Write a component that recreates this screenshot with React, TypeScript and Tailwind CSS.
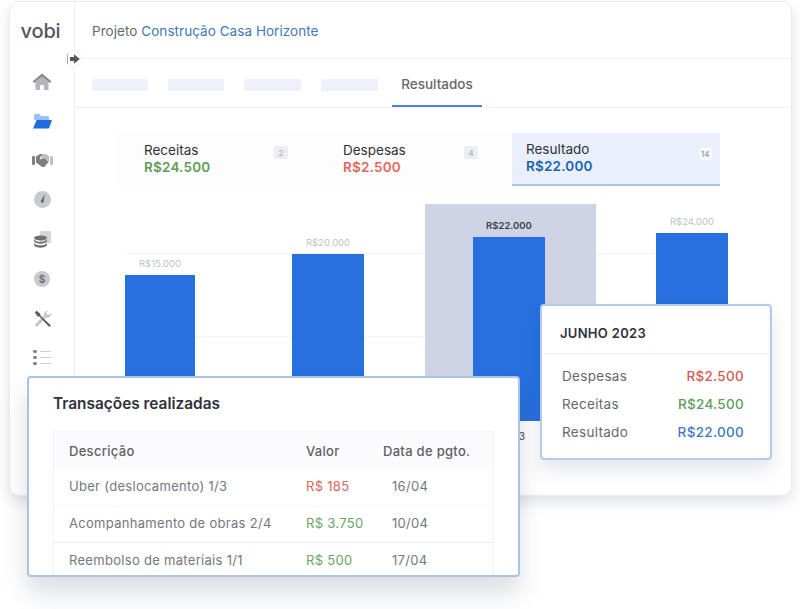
const font = { fontFamily: 'Inter, "Liberation Sans", sans-serif' };

function HomeIcon() {
  return (
    <svg width="20" height="18" viewBox="0 0 20 18">
      <path d="M10 3.5 3.500 9v8h4.600v-5h3.800v5h4.600V9z" fill="#b4b5ba" />
      <path d="M10 .6.6 8.6l1.400 1.500L10 3.400l8 6.700 1.400-1.500z" fill="#85868c" />
    </svg>
  );
}

function FolderIcon() {
  return (
    <svg width="19" height="15" viewBox="0 0 19 15">
      <path d="M1 1.500C1 .7 1.600 0 2.400 0h4l1.800 2h6.400c.8 0 1.400.6 1.400 1.400V6H1z" fill="#9cc0f3" />
      <path d="M3.600 6H19l-2.600 7.600c-.2.6-.7 1-1.300 1H0z" fill="#1f6cdc" />
    </svg>
  );
}

function HandshakeIcon() {
  return (
    <svg width="21" height="15" viewBox="0 0 21 15">
      <rect x="0" y="3" width="3" height="9" rx="1" fill="#808086" />
      <rect x="18" y="3" width="3" height="9" rx="1" fill="#c0c0c5" />
      <path d="M4 3.500 8 1h3l-3 3.500c-.7 1.300.8 2.400 2 1.600l2-1.600 4.500 4.500-3.500 4.200c-1 1-2.200 1.200-3.400.3L4 9.500z" fill="#7d7d83" />
      <path d="M11 1h2.800L17 3.200v6l-5-5-2.400 1.600C9 6 8.400 5.300 8.900 4.600z" fill="#bcbdc2" />
    </svg>
  );
}

function GaugeIcon() {
  return (
    <svg width="17" height="17" viewBox="0 0 17 17">
      <circle cx="8.500" cy="8.500" r="8.500" fill="#c8c9ce" />
      <path d="M10.800 3.500 9.700 10a1.500 1.500 0 1 1-2.600-.6z" fill="#66676d" />
    </svg>
  );
}

function CoinsIcon() {
  return (
    <svg width="17" height="17" viewBox="0 0 17 17">
      <rect x="6" y="0" width="11" height="12" rx="1.500" fill="#d4d5da" />
      <ellipse cx="6.500" cy="7" rx="6.500" ry="2.500" fill="#707177" />
      <path d="M0 8.500c1 1.600 3.500 2.300 6.500 2.300S12 10.100 13 8.500v1.800c-.6 1.600-3.300 2.500-6.500 2.500S.6 11.900 0 10.300z" fill="#707177" />
      <path d="M0 12c1 1.600 3.500 2.300 6.500 2.300S12 13.600 13 12v2c-.6 1.700-3.300 2.700-6.500 2.700S.6 15.700 0 14z" fill="#707177" />
    </svg>
  );
}

function DollarIcon() {
  return (
    <div className="flex h-[16px] w-[16px] items-center justify-center rounded-full bg-[#c8c9ce] text-[10px] font-bold leading-none text-[#707177]">
      $
    </div>
  );
}

function ToolsIcon() {
  return (
    <svg width="17" height="17" viewBox="0 0 17 17">
      <path d="M14 .6a3.800 3.800 0 0 0-3.700 5L1.500 14a1.500 1.500 0 0 0 2 2.200l8.600-8.600a3.800 3.800 0 0 0 4.700-4.500l-2.200 2-1.800-.5-.5-1.800z" fill="#c4c5ca" />
      <path d="M.8 2.400 2.400.8l4 3v1.700l9.800 9.200c.9 1 .2 2.100-.4 2.100-.5 0-1-.2-1.300-.5L5.300 6.600H3.700z" fill="#5c5d63" />
    </svg>
  );
}

function ListIcon() {
  const rows = [0, 1, 2];
  return (
    <div className="flex flex-col gap-[2.500px]">
      {rows.map((r) => (
        <div key={r} className="flex items-center gap-[3px]">
          <span className="h-[3.500px] w-[3.500px] rounded-full bg-[#808187]" />
          <span className="h-[1.500px] w-[11px] bg-[#cfd0d5]" />
        </div>
      ))}
    </div>
  );
}

const sideIcons = [
  <HomeIcon key="home" />,
  <FolderIcon key="folder" />,
  <HandshakeIcon key="deal" />,
  <GaugeIcon key="gauge" />,
  <CoinsIcon key="coins" />,
  <DollarIcon key="dollar" />,
  <ToolsIcon key="tools" />,
  <ListIcon key="list" />,
];

function Sidebar() {
  return (
    <aside className="flex w-[65px] shrink-0 flex-col items-center border-r border-[#f0f0f3]">
      <div className="mt-[16px] h-[26px] pr-[3px] text-[20px] font-medium leading-[26px] tracking-[-0.2px] text-[#55565c]">vobi</div>
      <nav className="mt-[18px] flex flex-col items-center">
        {sideIcons.map((icon, i) => (
          <div key={i} className="flex h-[39.400px] w-[24px] items-center justify-center">
            {icon}
          </div>
        ))}
      </nav>
    </aside>
  );
}

function Tabs() {
  return (
    <div className="flex h-[49px] items-stretch gap-[20px] border-b border-[#f0f1f4] pl-[17px]">
      {[56, 56, 57, 57].map((w, i) => (
        <div key={i} className="mt-[20px] h-[12px] rounded-[1px] bg-[#eef1fb]" style={{ width: w }} />
      ))}
      <div className="-ml-[6px] flex w-[90px] items-center justify-center border-b-2 border-[#4b83d8] pt-[4px] text-[13.500px] font-medium text-[#66676d]">
        Resultados
      </div>
    </div>
  );
}

function SummaryItem(props: { className: string; label: string; value: string; valueColor: string; count: string; countLeft: string }) {
  return (
    <div className={`flex pl-[28px] pt-[9px] ${props.className}`}>
      <div className="w-[68px]">
        <div className="text-[13.500px] leading-[17px] text-[#2f3036]">{props.label}</div>
        <div className={`text-[13.500px] font-semibold leading-[16px] tracking-[0.2px] ${props.valueColor}`}>{props.value}</div>
      </div>
      <span className={`mt-[4px] flex h-[13px] w-[14px] items-center justify-center rounded-[2px] bg-[#eceef4] text-[8px] text-[#a6a8b0] ${props.countLeft}`}>{props.count}</span>
    </div>
  );
}

function Summary() {
  return (
    <div className="ml-[41px] mt-[25px] flex h-[53px] w-[604px]">
      <div className="flex w-[396px] bg-[#fdfdfe]">
        <SummaryItem className="w-[199px]" label="Receitas" value="R$24.500" valueColor="text-[#5d9e57]" count="2" countLeft="ml-[62px]" />
        <SummaryItem className="w-[197px]" label="Despesas" value="R$2.500" valueColor="text-[#e2685c]" count="4" countLeft="ml-[53px]" />
      </div>
      <div className="flex w-[208px] border-b-2 border-[#a9c3ee] bg-[#e9f0fc] pl-[14px] pt-[8px]">
        <div>
          <div className="text-[13.500px] font-normal leading-[17px] text-[#2f3036]">Resultado</div>
          <div className="text-[13.500px] font-semibold leading-[17px] tracking-[0.2px] text-[#1b62b0]">R$22.000</div>
        </div>
        <span className="ml-[106px] mt-[6px] flex h-[13px] w-[13px] shrink-0 items-center justify-center rounded-[2px] bg-[#f5f7fd] text-[8px] text-[#8a8c94]">14</span>
      </div>
    </div>
  );
}

function Bar(props: { value: string; height: number; width: string; active?: boolean }) {
  return (
    <div className="flex flex-col items-center justify-end">
      <span className={`mb-[5px] text-[9.500px] leading-[12px] ${props.active ? 'font-semibold text-[#3d3f48]' : 'text-[#c0c1c8]'}`}>{props.value}</span>
      <div className={`bg-[#2870e0] ${props.width}`} style={{ height: props.height }} />
    </div>
  );
}

function Chart() {
  return (
    <div className="relative mt-[18px] flex h-[217px] items-stretch pl-[50px]">
      <div className="absolute left-[50px] right-[64px] top-[49px] border-t border-[#f1f2f5]" />
      <div className="absolute left-[50px] right-[200px] top-[132px] border-t border-[#f1f2f5]" />
      <div className="relative flex w-[70px] justify-center">
        <Bar value="R$15.000" height={146} width="w-[70px]" />
      </div>
      <div className="relative ml-[97px] flex w-[72px] justify-center">
        <Bar value="R$20.000" height={167} width="w-[72px]" />
      </div>
      <div className="relative ml-[61px] flex w-[171px] justify-center bg-[#ced4e6] pr-[3px]">
        <Bar value="R$22.000" height={184} width="w-[72px]" active />
        <span className="absolute right-[71px] top-[226px] text-[10px] font-medium leading-[12px] text-[#55565e]">Jun 2023</span>
      </div>
      <div className="relative ml-[60px] flex w-[72px] justify-center">
        <Bar value="R$24.000" height={188} width="w-[72px]" />
      </div>
    </div>
  );
}

const transactions = [
  { desc: 'Uber (deslocamento) 1/3', value: 'R$ 185', color: 'text-[#d9655c]', date: '16/04', line: 'border-[#f8f8fa]' },
  { desc: 'Acompanhamento de obras 2/4', value: 'R$ 3.750', color: 'text-[#6aa564]', date: '10/04', line: 'border-[#e9eaee]' },
  { desc: 'Reembolso de materiais 1/1', value: 'R$ 500', color: 'text-[#6aa564]', date: '17/04', line: 'border-transparent' },
];

function TransactionsCard() {
  return (
    <section className="absolute left-[27px] top-[376px] h-[201px] w-[493px] overflow-hidden rounded-[4px] border-2 border-[#a8c3e6] bg-white pl-[24px] pr-[24px] shadow-[0_16px_24px_rgba(40,50,70,0.16)]">
      <h2 className="mt-[15px] h-[21px] text-[15.400px] font-semibold leading-[21px] text-[#30313a]">Transações realizadas</h2>
      <div className="mt-[17px] border-x border-t border-[#f3f3f6]">
        <div className="flex h-[37px] items-center bg-[#fbfbfd] pl-[15px] pt-[2px] text-[13px] font-medium tracking-[0.3px] text-[#5f6068]">
          <span className="w-[237px]">Descrição</span>
          <span className="w-[77px]">Valor</span>
          <span>Data de pgto.</span>
        </div>
        {transactions.map((t) => (
          <div key={t.desc} className={`flex h-[37px] items-center border-b pl-[15px] text-[13px] tracking-[0.3px] text-[#75767e] ${t.line}`}>
            <span className="w-[237px]">{t.desc}</span>
            <span className={`w-[86px] ${t.color}`}>{t.value}</span>
            <span>{t.date}</span>
          </div>
        ))}
      </div>
    </section>
  );
}

const monthRows = [
  { label: 'Despesas', value: 'R$2.500', color: 'text-[#d9594f]' },
  { label: 'Receitas', value: 'R$24.500', color: 'text-[#5d9e57]' },
  { label: 'Resultado', value: 'R$22.000', color: 'text-[#3f78c4]' },
];

function MonthCard() {
  return (
    <section className="absolute left-[540px] top-[304px] h-[156px] w-[232px] rounded-[4px] border-2 border-[#b1cbee] bg-white shadow-[0_10px_18px_rgba(40,50,70,0.12)]">
      <div className="mx-[2px] flex h-[48px] items-center border-b border-[#eef0f5] pl-[16px] pt-[9px] text-[13px] font-semibold tracking-[0.3px] text-[#30313a]">
        JUNHO 2023
      </div>
      <div className="mt-[8px] flex flex-col pl-[20px] pr-[26px]">
        {monthRows.map((r) => (
          <div key={r.label} className="flex h-[28px] items-center justify-between text-[13.500px] tracking-[0.3px]">
            <span className="text-[#66676e]">{r.label}</span>
            <span className={`font-medium ${r.color}`}>{r.value}</span>
          </div>
        ))}
      </div>
    </section>
  );
}

export default function App() {
  return (
    <div className="relative h-[609px] w-[800px] overflow-hidden bg-white" style={font}>
      <div className="ml-[9px] flex h-[495px] w-[783px] translate-y-[1px] rounded-[10px] border border-[#ececf0] bg-white shadow-[0_6px_14px_rgba(40,50,70,0.14)]">
        <Sidebar />
        <main className="flex min-w-0 flex-1 flex-col">
          <header className="flex h-[57px] items-center border-b border-[#f0f1f4] pl-[17px] pt-[3px] text-[13.500px] tracking-[0.05px]">
            <span className="text-[#66676e]">Projeto&nbsp;</span>
            <span className="text-[#3f78b8]">Construção Casa Horizonte</span>
          </header>
          <Tabs />
          <Summary />
          <Chart />
        </main>
      </div>
      <button className="absolute left-[64px] top-[50px] flex h-[18px] w-[18px] items-center justify-center rounded-full border border-[#f3f3f6] bg-white">
        <svg width="13" height="10" viewBox="0 0 13 10">
          <rect x="0" y="0" width="1" height="10" fill="#a9aab0" />
          <path d="M3 3h4V.3L12.800 5 7 9.700V7H3z" fill="#55565c" />
        </svg>
      </button>
      <TransactionsCard />
      <MonthCard />
    </div>
  );
}
